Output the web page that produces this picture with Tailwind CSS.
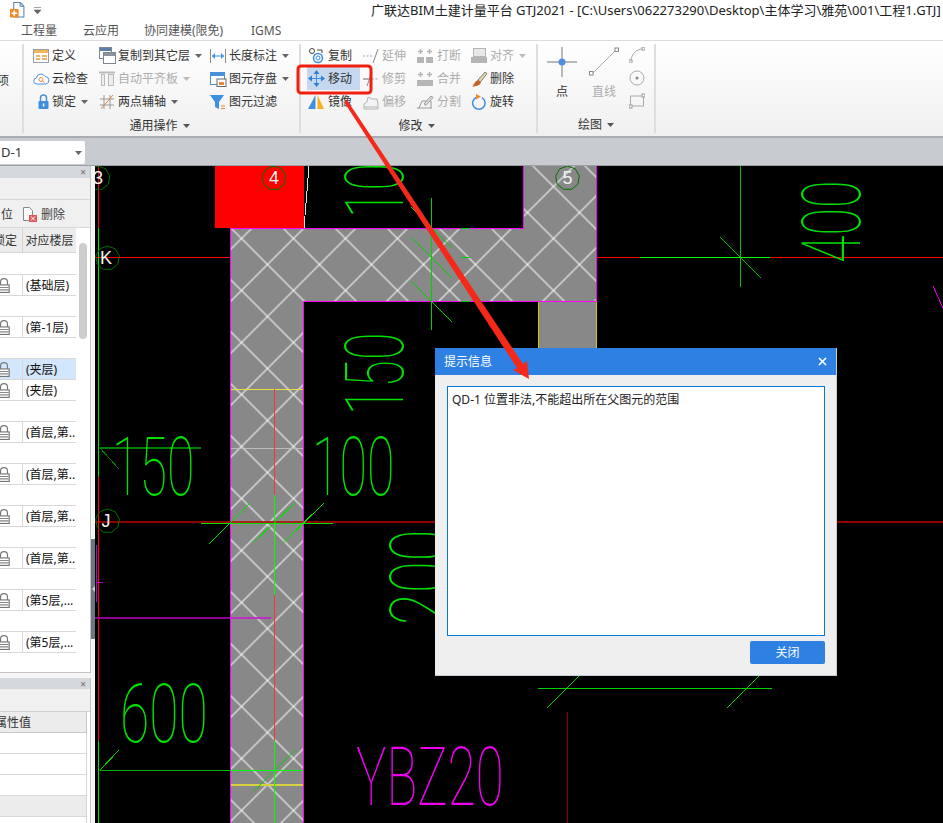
<!DOCTYPE html>
<html>

<head>
  <meta charset="utf-8">
  <title>GTJ2021</title>
  <script src="https://cdn.jsdelivr.net/npm/@tailwindcss/browser@4"></script>
</head>

<body class="bg-white text-[#333] font-['Noto_Sans','Noto_Sans_CJK_SC',sans-serif] text-[12px] leading-none">
  <div class="relative w-[943px] h-[823px] overflow-hidden flex flex-col">

    <!-- title + tabs -->
    <header class="h-[40px] bg-white relative shrink-0">
      <div class="flex items-start h-[20px] pl-[10px] pt-[2px]">
        <svg class="w-[15px] h-[16px]" viewBox="0 0 14 15">
          <path d="M3.500 .5h6l3.500 3.500v10h-9.500z" fill="#fff" stroke="#5a86b5" />
          <path d="M9.500 .5v3.500h3.500" fill="none" stroke="#5a86b5" />
          <rect x="0" y="6.500" width="8" height="8" fill="#f08a24" />
          <path d="M4 8v5M1.500 10.500h5" stroke="#fff" stroke-width="1.500" />
        </svg>
        <svg class="w-[7px] h-[7px] ml-[9px] mt-[5px]" viewBox="0 0 7 7">
          <path d="M0 .5h7M0 3h7l-3.500 4z" fill="#666" stroke="#666" stroke-width=".6" />
        </svg>
        <div class="ml-[330px] mt-[2px] text-[13px] whitespace-nowrap text-[#222]">广联达BIM土建计量平台 GTJ2021 - [C:\Users\062273290\Desktop\主体学习\雅苑\001\工程1.GTJ]</div>
      </div>
      <nav class="flex pl-[21px] pt-[5px] text-[#555] text-[12px]">
        <span class="w-[62px]">工程量</span>
        <span class="w-[61px]">云应用</span>
        <span class="w-[107px]">协同建模(限免)</span>
        <span>IGMS</span>
      </nav>
    </header>

    <!-- ribbon -->
    <section class="h-[98px] shrink-0 flex border-t border-b-2 border-t-[#dcdcdc] border-b-[#a9adb2] bg-linear-to-b from-white to-[#f0f0f0]">
      <div class="w-[24px] border-r-2 border-[#dedede] my-[3px] flex flex-col pt-[31px] overflow-hidden items-end pr-[13px]">
        <span>项</span>
      </div>

      <!-- group: 通用操作 -->
      <div class="w-[277px] border-r-2 border-[#dedede] my-[3px] pl-[9px] flex flex-col">
        <div class="flex h-[71px]">
          <div class="w-[66px] flex flex-col">
            <div class="h-[23px] flex items-center gap-[2px]">
              <svg class="w-[17px] h-[16px]" viewBox="0 0 17 16"><rect x=".5" y="1.500" width="15" height="13" fill="#fff" stroke="#9aa0a6" /><rect x="1" y="2" width="14" height="3" fill="#f2b65a" /><path d="M3 8h4M9 8h5M3 11h4M9 11h5" stroke="#e89a3c" stroke-width="1.500" /></svg>
              <span>定义</span>
            </div>
            <div class="h-[23px] flex items-center gap-[2px]">
              <svg class="w-[17px] h-[16px]" viewBox="0 0 17 16"><path d="M4 13a3 3 0 0 1-.5-6 4.500 4.500 0 0 1 8.500-1.500 3.800 3.800 0 0 1 1 7.500z" fill="#fff" stroke="#4a90d9" /><circle cx="8" cy="8.500" r="2" fill="none" stroke="#e8863c" /><path d="M9.500 10l2 1.500" stroke="#e8863c" /></svg>
              <span>云检查</span>
            </div>
            <div class="h-[23px] flex items-center gap-[2px] pl-[4px]">
              <svg class="w-[13px] h-[16px]" viewBox="0 0 13 16"><path d="M3.500 7v-3a3 3 0 0 1 6 0v3" fill="none" stroke="#4a90d9" stroke-width="1.500" /><rect x="1.500" y="7" width="10" height="8" rx="1" fill="#3f8fe0" /><rect x="5.800" y="9.500" width="1.500" height="3" fill="#fff" /></svg>
              <span>锁定</span>
              <svg class="w-[7px] h-[4px] ml-[3px]" viewBox="0 0 7 4"><path d="M0 0h7l-3.500 4z" fill="#666" /></svg>
            </div>
          </div>
          <div class="w-[111px] flex flex-col">
            <div class="h-[23px] flex items-center gap-[2px]">
              <svg class="w-[17px] h-[17px]" viewBox="0 0 17 17"><rect x=".5" y=".5" width="12" height="11" fill="#fff" stroke="#7d8794" /><rect x="1" y="1" width="11" height="3" fill="#5c7fa8" /><rect x="4.500" y="5.500" width="12" height="11" fill="#fff" stroke="#7d8794" /><rect x="5" y="6" width="11" height="3" fill="#8a929c" /></svg>
              <span>复制到其它层</span>
              <svg class="w-[7px] h-[4px] ml-[3px]" viewBox="0 0 7 4"><path d="M0 0h7l-3.500 4z" fill="#666" /></svg>
            </div>
            <div class="h-[23px] flex items-center gap-[2px] text-[#adadad]">
              <svg class="w-[17px] h-[16px]" viewBox="0 0 17 16"><path d="M0 1.500h16" stroke="#bbb" stroke-width="2" /><rect x="2.500" y="3.500" width="3" height="11" fill="#eee" stroke="#bbb" /><rect x="9.500" y="3.500" width="5" height="11" fill="#eee" stroke="#bbb" /></svg>
              <span>自动平齐板</span>
              <svg class="w-[7px] h-[4px] ml-[3px]" viewBox="0 0 7 4"><path d="M0 0h7l-3.500 4z" fill="#bbb" /></svg>
            </div>
            <div class="h-[23px] flex items-center gap-[2px]">
              <svg class="w-[17px] h-[16px]" viewBox="0 0 17 16"><path d="M5 1v14M11 1v14M1 5h14" stroke="#9a9a9a" /><path d="M2 15L14 1" stroke="#e8863c" /><path d="M1 11h14" stroke="#9a9a9a" /></svg>
              <span>两点辅轴</span>
              <svg class="w-[7px] h-[4px] ml-[3px]" viewBox="0 0 7 4"><path d="M0 0h7l-3.500 4z" fill="#666" /></svg>
            </div>
          </div>
          <div class="flex flex-col">
            <div class="h-[23px] flex items-center gap-[2px]">
              <svg class="w-[17px] h-[16px]" viewBox="0 0 17 16"><path d="M.5 1v14M15.500 1v14" stroke="#8a8a8a" /><path d="M2 8h12" stroke="#3f8fe0" /><path d="M2 8l3-3v6zM14 8l-3-3v6z" fill="#3f8fe0" /></svg>
              <span>长度标注</span>
              <svg class="w-[7px] h-[4px] ml-[3px]" viewBox="0 0 7 4"><path d="M0 0h7l-3.500 4z" fill="#666" /></svg>
            </div>
            <div class="h-[23px] flex items-center gap-[2px]">
              <svg class="w-[17px] h-[16px]" viewBox="0 0 17 16"><rect x=".5" y="1.500" width="14" height="12" fill="#fff" stroke="#4a90d9" /><rect x="1" y="2" width="13" height="3" fill="#4a90d9" /><rect x="7" y="8" width="9" height="7.500" fill="#fff" stroke="#666" /><rect x="9" y="11" width="5" height="3" fill="#e8863c" /></svg>
              <span>图元存盘</span>
              <svg class="w-[7px] h-[4px] ml-[3px]" viewBox="0 0 7 4"><path d="M0 0h7l-3.500 4z" fill="#666" /></svg>
            </div>
            <div class="h-[23px] flex items-center gap-[2px]">
              <svg class="w-[17px] h-[16px]" viewBox="0 0 17 16"><path d="M0 1h14l-5 7v7l-4-2v-5z" fill="#3f8fe0" /><path d="M11 12h4M11 14.500h4" stroke="#e8863c" /></svg>
              <span>图元过滤</span>
            </div>
          </div>
        </div>
        <div class="flex items-center justify-center gap-[5px] h-[18px] mt-[5px] pr-[13px]">
          <span>通用操作</span>
          <svg class="w-[7px] h-[4px]" viewBox="0 0 7 4"><path d="M0 0h7l-3.500 4z" fill="#555" /></svg>
        </div>
      </div>

      <!-- group: 修改 -->
      <div class="w-[237px] border-r-2 border-[#dedede] my-[3px] pl-[7px] flex flex-col">
        <div class="flex h-[71px]">
          <div class="w-[55px] flex flex-col">
            <div class="h-[23px] flex items-center gap-[3px]">
              <svg class="w-[17px] h-[17px]" viewBox="0 0 17 17"><circle cx="4" cy="4" r="2.500" fill="#fff" stroke="#444" /><circle cx="10" cy="11" r="4.500" fill="none" stroke="#3f8fe0" stroke-width="1.500" /><circle cx="10" cy="11" r="2" fill="none" stroke="#3f8fe0" /><path d="M9 3h5v3" fill="none" stroke="#444" /></svg>
              <span>复制</span>
            </div>
            <div class="h-[23px] flex items-center gap-[3px] bg-[#c6d8ef] w-[53px] -ml-[1px] pl-[1px]">
              <svg class="w-[17px] h-[17px]" viewBox="0 0 17 17"><path d="M8.500 3v11M3 8.500h11" stroke="#3f8fe0" /><path d="M8.500 0l3 4h-6zM8.500 17l3-4h-6zM0 8.500l4-3v6zM17 8.500l-4-3v6z" fill="#2f7fd5" /></svg>
              <span>移动</span>
            </div>
            <div class="h-[23px] flex items-center gap-[3px]">
              <svg class="w-[17px] h-[16px]" viewBox="0 0 17 16"><path d="M7.500 1v14H0z" fill="#3f8fe0" /><path d="M9.500 1v14H16z" fill="#f5b21c" /></svg>
              <span>镜像</span>
            </div>
          </div>
          <div class="w-[54px] flex flex-col text-[#adadad]">
            <div class="h-[23px] flex items-center gap-[2px]">
              <svg class="w-[17px] h-[16px]" viewBox="0 0 17 16"><path d="M0 8h10" stroke="#aaa" stroke-dasharray="2 1.500" /><path d="M10 15L15 1" stroke="#888" /></svg>
              <span>延伸</span>
            </div>
            <div class="h-[23px] flex items-center gap-[2px]">
              <svg class="w-[17px] h-[16px]" viewBox="0 0 17 16"><path d="M0 8h6" stroke="#666" /><path d="M9 8h7" stroke="#aaa" stroke-dasharray="2 1.500" /><path d="M4 15L9 1" stroke="#888" /></svg>
              <span>修剪</span>
            </div>
            <div class="h-[23px] flex items-center gap-[2px]">
              <svg class="w-[17px] h-[16px]" viewBox="0 0 17 16"><path d="M1 15v-5l3-2 1-5 4 2 5 0 1 5v5z" fill="#f3f3f3" stroke="#b5b5b5" /><path d="M1 13h14" stroke="#b5b5b5" /></svg>
              <span>偏移</span>
            </div>
          </div>
          <div class="w-[54px] flex flex-col text-[#adadad]">
            <div class="h-[23px] flex items-center gap-[3px]">
              <svg class="w-[17px] h-[16px]" viewBox="0 0 17 16"><rect x="0" y="9" width="7" height="6" fill="#b5b5b5" /><rect x="9" y="9" width="7" height="6" fill="#b5b5b5" /><path d="M3.500 1v5M12.500 1v5M1 3.500h5M10 3.500h5" stroke="#b5b5b5" stroke-width="1.500" /></svg>
              <span>打断</span>
            </div>
            <div class="h-[23px] flex items-center gap-[3px]">
              <svg class="w-[17px] h-[16px]" viewBox="0 0 17 16"><rect x="0" y="9" width="16" height="6" fill="#b5b5b5" /><path d="M3.500 1v5M12.500 1v5M1 3.500h5M10 3.500h5" stroke="#b5b5b5" stroke-width="1.500" /></svg>
              <span>合并</span>
            </div>
            <div class="h-[23px] flex items-center gap-[3px]">
              <svg class="w-[17px] h-[16px]" viewBox="0 0 17 16"><path d="M0 14h15M2 14l3-7h9v7" fill="none" stroke="#999" /><path d="M7 10l7-8 2 1.500-7 8z" fill="#ddd" stroke="#999" /></svg>
              <span>分割</span>
            </div>
          </div>
          <div class="flex flex-col">
            <div class="h-[23px] flex items-center gap-[2px] text-[#adadad]">
              <svg class="w-[17px] h-[16px]" viewBox="0 0 17 16"><rect x="2.500" y=".5" width="12" height="8" fill="#e8e8e8" stroke="#b5b5b5" /><rect x="0" y="9" width="16" height="6" fill="#b5b5b5" /></svg>
              <span>对齐</span>
              <svg class="w-[7px] h-[4px] ml-[3px]" viewBox="0 0 7 4"><path d="M0 0h7l-3.500 4z" fill="#bbb" /></svg>
            </div>
            <div class="h-[23px] flex items-center gap-[2px]">
              <svg class="w-[17px] h-[16px]" viewBox="0 0 17 16"><path d="M7 9l7-8 2 1.500-6.500 8.500z" fill="#e6d9a8" stroke="#555" stroke-width=".7" /><path d="M7 9l3 2.500c-1 3-5 4-9 4 2-1 2-5 6-6.500z" fill="#c8642a" /></svg>
              <span>删除</span>
            </div>
            <div class="h-[23px] flex items-center gap-[2px]">
              <svg class="w-[17px] h-[16px]" viewBox="0 0 17 16"><path d="M5 3.500a6.200 6.200 0 1 0 6 .2" fill="none" stroke="#3f8fe0" stroke-width="1.500" /><path d="M5 0l5 2.500-5 3z" fill="#f08a24" /></svg>
              <span>旋转</span>
            </div>
          </div>
        </div>
        <div class="flex items-center justify-center gap-[5px] h-[18px] mt-[5px] pr-[11px]">
          <span>修改</span>
          <svg class="w-[7px] h-[4px]" viewBox="0 0 7 4"><path d="M0 0h7l-3.500 4z" fill="#555" /></svg>
        </div>
      </div>

      <!-- group: 绘图 -->
      <div class="w-[118px] border-r-2 border-[#dedede] my-[3px] flex flex-col">
        <div class="flex h-[71px] pl-[8px]">
          <div class="w-[32px] flex flex-col items-center">
            <svg class="w-[30px] h-[30px] mt-[3px]" viewBox="0 0 30 30"><path d="M15 0v30M0 15h30" stroke="#777" /><circle cx="15" cy="15" r="3.500" fill="#4a90e2" /></svg>
            <span class="mt-[9px]">点</span>
          </div>
          <div class="w-[42px] ml-[5px] flex flex-col items-center text-[#adadad]">
            <svg class="w-[30px] h-[30px] mt-[3px]" viewBox="0 0 30 30"><path d="M3 27L27 3" stroke="#aaa" /><rect x=".5" y="24.500" width="3.500" height="3.500" fill="#fff" stroke="#888" /><rect x="26" y="1" width="3.500" height="3.500" fill="#fff" stroke="#888" /></svg>
            <span class="mt-[9px]">直线</span>
          </div>
          <div class="w-[16px] ml-[4px] flex flex-col gap-[7px] pt-[3px]">
            <svg class="w-[16px] h-[16px]" viewBox="0 0 16 16"><path d="M2 15C2 7 7 2 14 2" fill="none" stroke="#aaa" /><rect x="0" y="13" width="3" height="3" fill="#fff" stroke="#999" /><rect x="13" y="0" width="3" height="3" fill="#fff" stroke="#999" /></svg>
            <svg class="w-[16px] h-[16px]" viewBox="0 0 16 16"><circle cx="8" cy="8" r="7" fill="none" stroke="#aaa" /><circle cx="8" cy="8" r="1.500" fill="#888" /></svg>
            <svg class="w-[16px] h-[16px]" viewBox="0 0 16 16"><rect x="1.500" y="3" width="13" height="10" fill="none" stroke="#aaa" /><rect x="0" y="12" width="3" height="3" fill="#fff" stroke="#999" /><rect x="13" y="1" width="3" height="3" fill="#fff" stroke="#999" /></svg>
          </div>
        </div>
        <div class="flex items-center justify-center gap-[5px] h-[18px] mt-[5px]">
          <span>绘图</span>
          <svg class="w-[7px] h-[4px]" viewBox="0 0 7 4"><path d="M0 0h7l-3.500 4z" fill="#555" /></svg>
        </div>
      </div>
    </section>

    <!-- element selector bar -->
    <div class="h-[27px] shrink-0 bg-[#c8ccd0] pt-[3px]">
      <div class="w-[85px] h-[23px] bg-white rounded-r-[2px] flex items-center justify-between pl-px pr-[3px]">
        <span class="text-[13px]">D-1</span>
        <svg class="w-[7px] h-[4px]" viewBox="0 0 7 4"><path d="M0 0h7l-3.500 4z" fill="#666" /></svg>
      </div>
    </div>

    <main class="flex-1 flex min-h-0 border-t border-[#9ba0a6]">
      <!-- left panels -->
      <aside class="w-[95px] shrink-0 relative bg-[#f5f5f5] flex flex-col">
        <div class="w-[91px] h-[507px] bg-white border-r border-b border-[#c4c4c4] flex flex-col overflow-hidden">
          <div class="h-[12px] bg-[#d5d8dc] flex items-center justify-end pr-[4px] text-[#888] text-[10px] font-bold">×</div>
          <div class="h-[22px] bg-[#f0f0f0] border-b border-[#d8d8d8]"></div>
          <div class="h-[28px] bg-[#f0f0f0] border-b border-[#d8d8d8] flex items-center pt-[2px]">
            <span class="w-[13px] flex justify-end">位</span>
            <svg class="w-[14px] h-[15px] ml-[10px]" viewBox="0 0 14 15"><path d="M.5 .5h6l3 3v10h-9z" fill="#fff" stroke="#8a8a8a" /><rect x="6" y="8" width="8" height="7" fill="#e0555a" /><path d="M8 9.500l4 4M12 9.500l-4 4" stroke="#fff" /></svg>
            <span class="ml-[4px] text-[#444]">删除</span>
          </div>
          <div class="flex-1 flex">
            <div class="w-[76px] flex flex-col shrink-0">
              <div class="h-[25px] bg-[#ececec] border-b border-[#d4d4d4] flex">
                <span class="w-[23px] border-r border-[#d4d4d4] flex items-center justify-end pr-[5px] pt-[2px] overflow-hidden whitespace-nowrap">锁定</span>
                <span class="flex-1 flex items-center justify-center pt-[2px] overflow-hidden whitespace-nowrap">对应楼层</span>
              </div>
              <div class="h-[21px]"></div>
              <div class="h-[22px] border-y border-[#d8d8d8] flex"><div class="w-[23px] border-r border-[#d8d8d8] flex items-center"><svg class="w-[14px] h-[15px] -ml-[3px]" viewBox="0 0 12 13"><path d="M3 6V3.500a3 3 0 0 1 6 0V6" fill="none" stroke="#777" /><rect x="1.500" y="6" width="9" height="6.500" fill="#fff" stroke="#777" /><path d="M2 8.200h8M2 10.300h8" stroke="#888" /></svg></div><span class="pl-[3px] pt-[2px] flex items-center text-[#111]">(基础层)</span></div>
              <div class="h-[20px]"></div>
              <div class="h-[22px] border-y border-[#d8d8d8] flex"><div class="w-[23px] border-r border-[#d8d8d8] flex items-center"><svg class="w-[14px] h-[15px] -ml-[3px]" viewBox="0 0 12 13"><path d="M3 6V3.500a3 3 0 0 1 6 0V6" fill="none" stroke="#777" /><rect x="1.500" y="6" width="9" height="6.500" fill="#fff" stroke="#777" /><path d="M2 8.200h8M2 10.300h8" stroke="#888" /></svg></div><span class="pl-[3px] pt-[2px] flex items-center text-[#111]">(第-1层)</span></div>
              <div class="h-[20px]"></div>
              <div class="h-[22px] border-y border-[#d8d8d8] bg-[#d3e6fb] flex"><div class="w-[23px] border-r border-[#d8d8d8] flex items-center"><svg class="w-[14px] h-[15px] -ml-[3px]" viewBox="0 0 12 13"><path d="M3 6V3.500a3 3 0 0 1 6 0V6" fill="none" stroke="#777" /><rect x="1.500" y="6" width="9" height="6.500" fill="#fff" stroke="#777" /><path d="M2 8.200h8M2 10.300h8" stroke="#888" /></svg></div><span class="pl-[3px] pt-[2px] flex items-center text-[#111]">(夹层)</span></div>
              <div class="h-[21px] border-b border-[#d8d8d8] flex"><div class="w-[23px] border-r border-[#d8d8d8] flex items-center"><svg class="w-[14px] h-[15px] -ml-[3px]" viewBox="0 0 12 13"><path d="M3 6V3.500a3 3 0 0 1 6 0V6" fill="none" stroke="#777" /><rect x="1.500" y="6" width="9" height="6.500" fill="#fff" stroke="#777" /><path d="M2 8.200h8M2 10.300h8" stroke="#888" /></svg></div><span class="pl-[3px] pt-[2px] flex items-center text-[#111]">(夹层)</span></div>
              <div class="h-[20px]"></div>
              <div class="h-[22px] border-y border-[#d8d8d8] flex"><div class="w-[23px] border-r border-[#d8d8d8] flex items-center"><svg class="w-[14px] h-[15px] -ml-[3px]" viewBox="0 0 12 13"><path d="M3 6V3.500a3 3 0 0 1 6 0V6" fill="none" stroke="#777" /><rect x="1.500" y="6" width="9" height="6.500" fill="#fff" stroke="#777" /><path d="M2 8.200h8M2 10.300h8" stroke="#888" /></svg></div><span class="pl-[3px] pt-[2px] flex items-center text-[#111] whitespace-nowrap">(首层,第..</span></div>
              <div class="h-[20px]"></div>
              <div class="h-[22px] border-y border-[#d8d8d8] flex"><div class="w-[23px] border-r border-[#d8d8d8] flex items-center"><svg class="w-[14px] h-[15px] -ml-[3px]" viewBox="0 0 12 13"><path d="M3 6V3.500a3 3 0 0 1 6 0V6" fill="none" stroke="#777" /><rect x="1.500" y="6" width="9" height="6.500" fill="#fff" stroke="#777" /><path d="M2 8.200h8M2 10.300h8" stroke="#888" /></svg></div><span class="pl-[3px] pt-[2px] flex items-center text-[#111] whitespace-nowrap">(首层,第..</span></div>
              <div class="h-[20px]"></div>
              <div class="h-[22px] border-y border-[#d8d8d8] flex"><div class="w-[23px] border-r border-[#d8d8d8] flex items-center"><svg class="w-[14px] h-[15px] -ml-[3px]" viewBox="0 0 12 13"><path d="M3 6V3.500a3 3 0 0 1 6 0V6" fill="none" stroke="#777" /><rect x="1.500" y="6" width="9" height="6.500" fill="#fff" stroke="#777" /><path d="M2 8.200h8M2 10.300h8" stroke="#888" /></svg></div><span class="pl-[3px] pt-[2px] flex items-center text-[#111] whitespace-nowrap">(首层,第..</span></div>
              <div class="h-[20px]"></div>
              <div class="h-[22px] border-y border-[#d8d8d8] flex"><div class="w-[23px] border-r border-[#d8d8d8] flex items-center"><svg class="w-[14px] h-[15px] -ml-[3px]" viewBox="0 0 12 13"><path d="M3 6V3.500a3 3 0 0 1 6 0V6" fill="none" stroke="#777" /><rect x="1.500" y="6" width="9" height="6.500" fill="#fff" stroke="#777" /><path d="M2 8.200h8M2 10.300h8" stroke="#888" /></svg></div><span class="pl-[3px] pt-[2px] flex items-center text-[#111] whitespace-nowrap">(首层,第..</span></div>
              <div class="h-[20px]"></div>
              <div class="h-[22px] border-y border-[#d8d8d8] flex"><div class="w-[23px] border-r border-[#d8d8d8] flex items-center"><svg class="w-[14px] h-[15px] -ml-[3px]" viewBox="0 0 12 13"><path d="M3 6V3.500a3 3 0 0 1 6 0V6" fill="none" stroke="#777" /><rect x="1.500" y="6" width="9" height="6.500" fill="#fff" stroke="#777" /><path d="M2 8.200h8M2 10.300h8" stroke="#888" /></svg></div><span class="pl-[3px] pt-[2px] flex items-center text-[#111] whitespace-nowrap">(第5层,...</span></div>
              <div class="h-[20px]"></div>
              <div class="h-[22px] border-y border-[#d8d8d8] flex"><div class="w-[23px] border-r border-[#d8d8d8] flex items-center"><svg class="w-[14px] h-[15px] -ml-[3px]" viewBox="0 0 12 13"><path d="M3 6V3.500a3 3 0 0 1 6 0V6" fill="none" stroke="#777" /><rect x="1.500" y="6" width="9" height="6.500" fill="#fff" stroke="#777" /><path d="M2 8.200h8M2 10.300h8" stroke="#888" /></svg></div><span class="pl-[3px] pt-[2px] flex items-center text-[#111] whitespace-nowrap">(第5层,...</span></div>
            </div>
            <div class="pl-[3px] pt-[15px]">
              <div class="w-[8px] h-[96px] rounded-full bg-[#cdcdcd]"></div>
            </div>
          </div>
        </div>
        <div class="h-[5px]"></div>
        <div class="w-[91px] flex-1 bg-white border-r border-[#c4c4c4] flex flex-col overflow-hidden">
          <div class="h-[11px] bg-[#d5d8dc] flex items-center justify-end pr-[4px] text-[#888] text-[10px] font-bold">×</div>
          <div class="h-[23px] bg-[#f0f0f0] border-b border-[#d0d0d0]"></div>
          <div class="h-[21px] bg-[#ececec] border-b border-r border-[#c8c8c8] flex items-center mr-[3px] pt-[2px] overflow-hidden"><span class="w-[31px] flex justify-end whitespace-nowrap">属性值</span></div>
          <div class="h-[21px] border-b border-r border-[#d8d8d8] mr-[3px]"></div>
          <div class="h-[21px] border-b border-r border-[#d8d8d8] mr-[3px]"></div>
          <div class="h-[21px] border-b border-r border-[#d8d8d8] mr-[3px]"></div>
          <div class="h-[21px] border-b border-r border-[#d8d8d8] bg-[#ececec] mr-[3px]"></div>
          <div class="flex-1 mr-[3px] border-r border-[#d8d8d8]"></div>
        </div>
        <!-- collapse handle -->
        <div class="absolute left-[91px] top-[373px] w-[4px] h-[100px] bg-[#6d7680] flex items-center justify-center">
          <svg class="w-[3px] h-[6px]" viewBox="0 0 3 6"><path d="M3 0v6L0 3z" fill="#ccc" /></svg>
        </div>
      </aside>

      <!-- drawing canvas -->
      <div class="relative flex-1 bg-black overflow-hidden font-['Roboto',sans-serif]">
        <svg class="absolute left-0 top-0 w-[848px] h-[657px]" viewBox="95 166 848 657" fill="none">
          <defs>
            <pattern id="hatch" patternUnits="userSpaceOnUse" x="241.500" y="446.500" width="52" height="52">
              <rect width="52" height="52" fill="#888" />
              <path d="M0 0L52 52M52 0L0 52" stroke="#f2f2f2" stroke-width="1.200" />
            </pattern>
            <polygon id="bubble" points="0,-12 7.700,-9.200 11.800,-2.100 10.400,6 4.100,11.300 -4.100,11.300 -10.400,6 -11.800,-2.100 -7.700,-9.200" stroke="#007000" />
          </defs>

          <g shape-rendering="crispEdges">
            <!-- axis lines -->
            <path d="M95 257.500H230M597 257.500H640M770 257.500H943" stroke="#f00" />
            <path d="M95 522H435M837 522H943" stroke="#900000" stroke-width="2" />
            <path d="M98.500 166V228M98.500 477V741" stroke="#f00" />
            <path d="M98.500 228V477M98.500 741V823" stroke="#00e000" />
            <path d="M640 257.500H770" stroke="#0f0" />
            <path d="M96.500 545V602M96 582h7" stroke="#c000c0" />
            <path d="M95 618H230" stroke="#900090" stroke-width="2" />
            <path d="M567.500 712V823" stroke="#8a0000" />

            <!-- walls -->
            <rect x="215" y="166" width="89" height="62" fill="#f00" />
            <path d="M309 166L304 228" stroke="#ddd" />
            <rect x="538" y="302" width="59" height="60" fill="#888" />
            <path d="M538.500 302V348M596.500 302V348" stroke="#d8c800" />
            <path d="M523.500 166V228.500H230.500V823H303.500V301.500H596.500V166" fill="url(#hatch)" stroke="#f0f" />
            <path d="M231 389.500H303" stroke="#e8e040" />
            <path d="M231 785H303" stroke="#d8d040" stroke-width="2" />
            <path d="M231 448H303" stroke="#bbb" />
            <path d="M230 618H271" stroke="#c030c0" stroke-width="2" />
            <path d="M274.500 389V495M274.500 595V741" stroke="#f33" />
            <path d="M274.500 495V595M274.500 741V823" stroke="#0f0" />
            <path d="M230 522H304" stroke="#b02020" stroke-width="2" />

            <!-- dimension ticks -->
            <path d="M431.500 198V330" stroke="#00d000" />
            <path d="M411 207L452 248M411 237L452 278M411 281L452 322M461 257.500H470M461 228.500H470M461 301.500H470" stroke="#00d000" />
            <path d="M740.500 166V287M720 237L761 278" stroke="#00c000" />
            <path d="M201 523.500H333M209 544L250 503M253 543L295 503M283 543L324 503" stroke="#00e000" />
            <path d="M100 448H201" stroke="#008000" stroke-width="2" />
            <path d="M100 448L119 469" stroke="#008000" />
            <path d="M100 770.500H231" stroke="#00b000" />
            <path d="M231 770.500H303" stroke="#0f0" />
            <path d="M100 770L119 750M254 791L295 750" stroke="#00d000" />
            <path d="M538 688.500H772M547 708L580 675M727 708L760 675" stroke="#00d000" />
            <path d="M933 286L943 308" stroke="#d000d0" />
          </g>

          <!-- dimension numbers -->
          <g font-size="81" font-weight="100" fill="#00e000">
            <text transform="translate(403 218) rotate(-90) scale(.62 1)">10</text>
            <text transform="translate(403 415) rotate(-90) scale(.62 1)">150</text>
            <text transform="translate(860 263) rotate(-90) scale(.62 1)">400</text>
            <text transform="translate(448 625) rotate(-90) scale(.72 1)">200</text>
            <text transform="translate(112 495) scale(.62 1)">150</text>
            <text transform="translate(312 495) scale(.62 1)">100</text>
            <text transform="translate(120 742) scale(.66 1)">600</text>
            <text transform="translate(356 805) scale(.63 1)" fill="#f000f0">YBZ20</text>
          </g>

          <!-- axis bubbles -->
          <use href="#bubble" x="274" y="178" />
          <use href="#bubble" x="567.500" y="178" />
          <use href="#bubble" x="98" y="178" />
          <use href="#bubble" x="107.500" y="258" />
          <use href="#bubble" x="107.500" y="521" />
          <g fill="#f2f2f2" font-size="18" text-anchor="middle" font-family="Liberation Sans">
            <text x="274" y="184">4</text>
            <text x="567.500" y="184">5</text>
            <text x="98" y="184">3</text>
            <text x="106" y="264">K</text>
            <text x="106" y="527">J</text>
          </g>
        </svg>

        <!-- message dialog -->
        <div class="absolute left-[340px] top-[182px] w-[402px] h-[328px] bg-[#efefef] border-b border-r border-[#c5ccd4] flex flex-col font-['Noto_Sans','Noto_Sans_CJK_SC',sans-serif]">
          <div class="h-[27px] bg-[#2e80e2] text-white flex items-center justify-between pl-[9px] pr-[9px]">
            <span class="text-[12px]">提示信息</span>
            <svg class="w-[9px] h-[9px]" viewBox="0 0 9 9"><path d="M1 1l7 7M8 1l-7 7" stroke="#fff" stroke-width="1.600" /></svg>
          </div>
          <div class="ml-[12px] mr-[11px] mt-[11px] h-[250px] bg-white border border-[#0078d7] px-[4px] pt-[7px] text-[12px] text-[#222]">QD-1 位置非法,不能超出所在父图元的范围</div>
          <div class="flex justify-end pr-[11px] pt-[5px]">
            <button class="w-[75px] h-[23px] bg-[#2e80e2] text-white rounded-[2px] text-[12px]">关闭</button>
          </div>
        </div>
      </div>
    </main>

    <!-- annotation drawn over the screenshot -->
    <svg class="absolute left-0 top-0 w-[943px] h-[823px] pointer-events-none" viewBox="0 0 943 823" fill="none">
      <rect x="298" y="66" width="73" height="27" rx="3" stroke="#f02010" stroke-width="3" />
      <path d="M344 102L347 100L523 364L527 361L529 379L513 370L517 368Z" fill="#f5291a" />
    </svg>
  </div>
</body>

</html>
